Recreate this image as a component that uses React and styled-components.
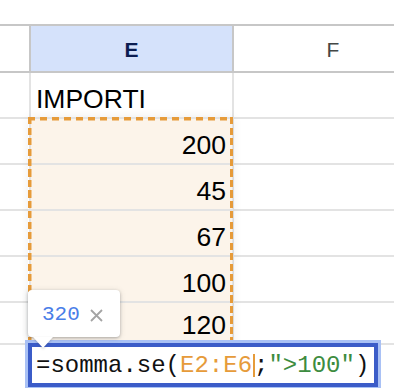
import React from "react";
import styled, { createGlobalStyle } from "styled-components";

const Global = createGlobalStyle`
  html, body { margin: 0; padding: 0; background: #fff; }
  body { overflow: hidden; }
`;

const Sheet = styled.div`
  position: relative;
  width: 394px;
  height: 388px;
  overflow: hidden;
  padding-top: 24px;
  box-sizing: border-box;
  font-family: "Liberation Sans", Arial, sans-serif;
  background: #fff;
`;

const HeaderRow = styled.div`
  display: flex;
  height: 49px;
  box-sizing: border-box;
  border-top: 2px solid #c7c7c7;
  border-bottom: 2px solid #c7c7c7;
`;

const HeaderCell = styled.div`
  flex: 0 0 ${(p) => p.$w}px;
  box-sizing: border-box;
  border-right: 2px solid #c7c7c7;
  background: ${(p) => (p.$active ? "#d5e2fb" : "#fff")};
  color: ${(p) => (p.$active ? "#0b1d51" : "#444746")};
  font-weight: ${(p) => (p.$active ? 700 : 400)};
  font-size: 21px;
  display: flex;
  align-items: center;
  justify-content: center;
  padding-top: 3px;
`;

const Row = styled.div`
  display: flex;
  height: ${(p) => p.$h}px;
  box-sizing: border-box;
  border-bottom: 2px solid #e3e3e3;
`;

const Cell = styled.div`
  flex: 0 0 ${(p) => p.$w}px;
  box-sizing: border-box;
  border-right: 2px solid #e3e3e3;
  background: ${(p) => (p.$range ? "#fcf4ea" : "#fff")};
  display: flex;
  align-items: flex-end;
  justify-content: ${(p) => (p.$num ? "flex-end" : "flex-start")};
  padding: 0 6px 5px 5px;
  font-size: 26.5px;
  line-height: 26px;
  color: #000;
  white-space: nowrap;
`;

const RangeOutline = styled.div`
  position: absolute;
  left: 28px;
  top: 117px;
  width: 205px;
  height: 232px;
  pointer-events: none;
  box-shadow: 0 0 10px rgba(0, 0, 0, 0.07);
  background:
    repeating-linear-gradient(90deg, #e69b3a 0 7px, transparent 7px 12px) left top / 100% 3.5px no-repeat,
    repeating-linear-gradient(90deg, #e69b3a 0 7px, transparent 7px 12px) left bottom / 100% 3.5px no-repeat,
    repeating-linear-gradient(180deg, #e69b3a 0 7px, transparent 7px 10.5px) left top / 3.5px 100% no-repeat,
    repeating-linear-gradient(180deg, #e69b3a 0 7px, transparent 7px 10.5px) right top / 3.5px 100% no-repeat;
`;

const Editor = styled.div`
  position: absolute;
  left: 25px;
  top: 340px;
  width: 356px;
  height: 50px;
  box-sizing: border-box;
  border: 3px solid #a9c1f5;
  background: #fff;
`;

const EditorInner = styled.div`
  height: 100%;
  box-sizing: border-box;
  border: 4px solid #3b5cc8;
  padding: 2px 0 0 4px;
  font-family: "Liberation Mono", "DejaVu Sans Mono", monospace;
  font-size: 24px;
  line-height: 34px;
  color: #111;
  white-space: nowrap;
`;

const Tok = styled.span`
  color: ${(p) => p.$c || "#111"};
`;

const Caret = styled.span`
  display: inline-block;
  width: 2px;
  height: 23px;
  background: #e69b3a;
  vertical-align: -5px;
  margin: 0 -1px 0 1px;
`;

const Tip = styled.div`
  position: absolute;
  left: 28px;
  top: 290px;
  width: 92px;
  height: 47px;
  box-sizing: border-box;
  background: #fff;
  border-radius: 4px;
  box-shadow: 0 1px 3px rgba(60, 64, 67, 0.35), 0 1px 6px rgba(60, 64, 67, 0.15);
  display: flex;
  align-items: center;
  gap: 10px;
  padding: 2px 0 0 14px;
  z-index: 2;
  &::after {
    content: "";
    position: absolute;
    left: 5px;
    bottom: -11px;
    border-left: 10px solid transparent;
    border-right: 10px solid transparent;
    border-top: 11px solid #fff;
    filter: drop-shadow(0 1px 1px rgba(60, 64, 67, 0.25));
  }
`;

const TipValue = styled.span`
  font-family: "Liberation Mono", "DejaVu Sans Mono", monospace;
  font-size: 21px;
  color: #4a7ee8;
`;

const Close = () => (
  <svg width="13" height="13" viewBox="0 0 13 13" style={{ marginTop: 1 }}>
    <path d="M1 1 L12 12 M12 1 L1 12" stroke="#a4a4a4" strokeWidth="1.8" fill="none" />
  </svg>
);

const rows = [
  { h: 46, v: "IMPORTI", range: false, num: false },
  { h: 46, v: "200", range: true, num: true },
  { h: 46, v: "45", range: true, num: true },
  { h: 46, v: "67", range: true, num: true },
  { h: 46, v: "100", range: true, num: true },
  { h: 42, v: "120", range: true, num: true },
  { h: 46, v: "", range: false, num: false },
];

export default function App() {
  return (
    <>
      <Global />
      <Sheet>
        <HeaderRow>
          <HeaderCell $w={31} />
          <HeaderCell $w={203} $active>E</HeaderCell>
          <HeaderCell $w={200}>F</HeaderCell>
        </HeaderRow>
        {rows.map((r, i) => (
          <Row key={i} $h={r.h}>
            <Cell $w={31} />
            <Cell $w={203} $range={r.range} $num={r.num}>{r.v}</Cell>
            <Cell $w={200} />
          </Row>
        ))}
        <RangeOutline />
        <Editor>
          <EditorInner>
            <Tok>=somma.se(</Tok>
            <Tok $c="#e69b3a">E2:E6</Tok>
            <Caret />
            <Tok>;</Tok>
            <Tok $c="#3d8c40">"&gt;100"</Tok>
            <Tok>)</Tok>
          </EditorInner>
        </Editor>
        <Tip>
          <TipValue>320</TipValue>
          <Close />
        </Tip>
      </Sheet>
    </>
  );
}
